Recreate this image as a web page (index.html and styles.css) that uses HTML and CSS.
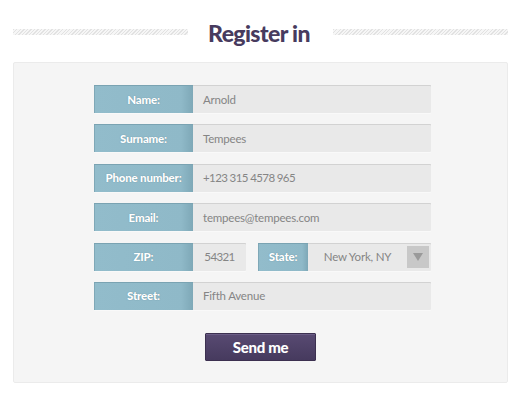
FILE: index.html
```html
<!DOCTYPE html>
<html>
<head>
<meta charset="utf-8">
<link rel="stylesheet" href="styles.css">
</head>
<body>
<div class="page">
  <header class="head">
    <span class="hatch"></span>
    <h1 class="title">Register in</h1>
    <span class="hatch"></span>
  </header>
  <form class="panel">
    <div class="rows">
      <div class="row"><span class="label">Name:</span><span class="value">Arnold</span></div>
      <div class="row"><span class="label">Surname:</span><span class="value">Tempees</span></div>
      <div class="row"><span class="label">Phone number:</span><span class="value num">+123 315 4578 965</span></div>
      <div class="row"><span class="label">Email:</span><span class="value">tempees@tempees.com</span></div>
      <div class="split">
        <div class="row zip"><span class="label">ZIP:</span><span class="value center num">54321</span></div>
        <div class="row state"><span class="label short">State:</span><span class="value center">New York, NY</span><span class="drop"><svg width="10" height="8" viewBox="0 0 10 8"><path d="M0 0 H10 L5 8 Z" fill="#9a9a9a"/></svg></span></div>
      </div>
      <div class="row"><span class="label">Street:</span><span class="value">Fifth Avenue</span></div>
    </div>
    <div class="actions"><button type="button" class="send">Send me</button></div>
  </form>
</div>
</body>
</html>
```
FILE: styles.css
```css
html, body { margin: 0; padding: 0; background: #fff; }
body { font-family: Lato, "Open Sans", "Liberation Sans", sans-serif; }
.page { width: 495px; margin-left: 13px; padding-top: 18px; }
.head { display: flex; align-items: center; height: 30px; margin-bottom: 14px; }
.hatch {
  flex: 1; height: 6px; margin-top: -2px;
  background: repeating-linear-gradient(135deg, #e2e2e2 0 1px, #f6f6f6 1px 2.5px);
}
.title {
  margin: 0 23px 0 20px; font-size: 23px; font-weight: 900; color: #473b5e;
  letter-spacing: -0.6px; line-height: 30px;
}
.panel {
  box-sizing: border-box; height: 321px; background: #f5f5f5;
  border: 1px solid #ebebeb; border-radius: 2px;
  padding: 22px 0 0 80px; display: flex; flex-direction: column;
}
.rows { width: 337px; display: flex; flex-direction: column; gap: 11.4px; }
.row { display: flex; height: 28px; box-sizing: border-box; background: #e9e9e9;
  box-shadow: inset 0 1px 0 #d2d2d2, 0 1px 0 #f9f9f9; border-radius: 1px; }
.label {
  width: 99px; flex: none; display: flex; align-items: center; justify-content: center;
  color: #fff; font-size: 11.5px; font-weight: 900; letter-spacing: -0.2px;
  background: linear-gradient(90deg, #92bccb 0%, #8fb9c8 88%, #7ea8b7 100%);
  box-shadow: inset 0 1px 0 #7aa3b2, inset 1px 0 0 #7fa8b7;
  text-shadow: 0 0 1px rgba(60,100,115,.6);
}
.label.short { width: 50px; }
.value { flex: 1; display: flex; align-items: center; padding-left: 10px; font-size: 11.5px; letter-spacing: -0.2px; color: #858585; }
.value.num { letter-spacing: -0.6px; }
.value.center { justify-content: center; padding-left: 0; }
.split { display: flex; gap: 12px; }
.zip { width: 152px; }
.state { flex: 1; }
.drop { width: 22px; height: 22px; margin: 3px 2px 0 0; background: #c8c8c8; display: flex; align-items: center; justify-content: center; }
.actions { display: flex; padding-left: 111px; margin-top: 23px; }
.send {
  width: 111px; height: 28px; border: 1px solid #3c3050; border-radius: 1px;
  background: linear-gradient(#584a72, #463a5e); color: #fff;
  font-family: Lato, "Open Sans", "Liberation Sans", sans-serif; font-weight: 900; font-size: 15px;
  letter-spacing: -0.3px; padding: 0; box-shadow: inset 0 1px 0 #6b5d86;
}
```
